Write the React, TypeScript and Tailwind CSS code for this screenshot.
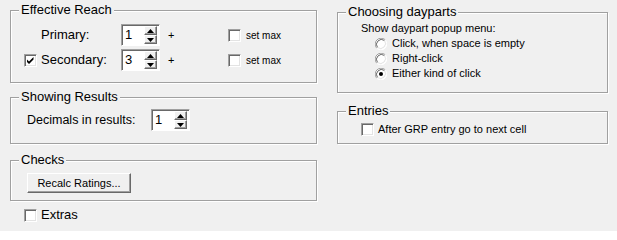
import type { ReactNode } from "react"

function CheckBox({ checked = false }: { checked?: boolean }) {
	return (
		<span className="relative flex h-[13px] w-[13px] shrink-0 items-center justify-center bg-white border border-t-[#a0a0a0] border-l-[#a0a0a0] border-r-white border-b-white shadow-[inset_1px_1px_0_#696969,inset_-1px_-1px_0_#e3e3e3]">
			{checked && (
				<svg width="9" height="9" viewBox="0 0 9 9">
					<path d="M1 3.5 L3 5.5 L7.5 1 L7.5 3.5 L3 8 L1 6 Z" fill="#000" />
				</svg>
			)}
		</span>
	)
}

function Radio({ checked = false }: { checked?: boolean }) {
	return (
		<svg width="12" height="12" viewBox="0 0 12 12" className="shrink-0">
			<circle cx="6" cy="6" r="5.5" fill="#fff" />
			<path d="M1.76 10.24 A6 6 0 0 1 10.24 1.76" stroke="#a0a0a0" strokeWidth="1" fill="none" />
			<path d="M2.5 9.5 A5 5 0 0 1 9.5 2.5" stroke="#696969" strokeWidth="1" fill="none" />
			<path d="M10.24 1.76 A6 6 0 0 1 1.76 10.24" stroke="#fff" strokeWidth="1" fill="none" />
			<path d="M9.5 2.5 A5 5 0 0 1 2.5 9.5" stroke="#e3e3e3" strokeWidth="1" fill="none" />
			{checked && <circle cx="6" cy="6" r="2" fill="#000" />}
		</svg>
	)
}

function SpinButton({ up }: { up?: boolean }) {
	return (
		<span className="flex flex-1 items-center justify-center bg-[#f0f0f0] border border-t-white border-l-white border-r-[#696969] border-b-[#696969] shadow-[inset_-1px_-1px_0_#a0a0a0]">
			<svg width="7" height="4" viewBox="0 0 7 4">
				{up ? <path d="M3.5 0 L7 4 L0 4 Z" fill="#000" /> : <path d="M0 0 L7 0 L3.5 4 Z" fill="#000" />}
			</svg>
		</span>
	)
}

function Spin({ value }: { value: string }) {
	return (
		<div className="flex h-[22px] w-[39px] shrink-0 bg-white border border-t-[#a0a0a0] border-l-[#a0a0a0] border-r-white border-b-white shadow-[inset_1px_1px_0_#696969]">
			<span className="flex-1 pl-[3px] pt-[1px] text-[13px] leading-[18px]">{value}</span>
			<div className="flex w-[15px] flex-col py-[1px] pr-[2px]">
				<SpinButton up />
				<SpinButton />
			</div>
		</div>
	)
}

function Group({ title, className, children }: { title: string, className?: string, children: ReactNode }) {
	return (
		<fieldset className={"border border-[#a0a0a0] px-[8px] shadow-[inset_1px_1px_0_#fff,1px_1px_0_#fff] " + (className ?? "")}>
			<legend className="bg-[#f0f0f0] px-[2px] text-[13px] leading-[16px]">{title}</legend>
			{children}
		</fieldset>
	)
}

function ReachRow({ label, value, checkable, checked }: { label: string, value: string, checkable?: boolean, checked?: boolean }) {
	return (
		<div className="flex h-[22px] items-center">
			<span className="flex w-[22px] pl-[5px]">{checkable && <CheckBox checked={checked} />}</span>
			<span className="w-[80px] text-[13px]">{label}</span>
			<Spin value={value} />
			<span className="w-[68px] pl-[8px] text-[11px]">+</span>
			<CheckBox />
			<span className="ml-[5px] text-[10px]">set max</span>
		</div>
	)
}

export default function App() {
	return (
		<div className="flex h-[231px] w-[617px] bg-[#f0f0f0] pl-[10px] pt-[2px] font-['Liberation_Sans',Arial,sans-serif] text-black select-none">
			<div className="flex w-[307px] flex-col">
				<Group title="Effective Reach">
					<div className="flex flex-col gap-[3px] pt-[6px] pb-[11px]">
						<ReachRow label="Primary:" value="1" />
						<ReachRow label="Secondary:" value="3" checkable checked />
					</div>
				</Group>

				<Group title="Showing Results" className="mt-[6px]">
					<div className="flex items-center pl-[8px] pt-[4px] pb-[12px]">
						<span className="w-[124px] text-[12.5px]">Decimals in results:</span>
						<Spin value="1" />
					</div>
				</Group>

				<Group title="Checks" className="mt-[8px]">
					<div className="pl-[8px] pt-[2px] pb-[6px]">
						<button className="h-[20px] w-[104px] bg-[#f0f0f0] text-[11px] border border-t-white border-l-white border-r-[#696969] border-b-[#696969] shadow-[inset_-1px_-1px_0_#a0a0a0]">
							Recalc Ratings...
						</button>
					</div>
				</Group>

				<div className="mt-[6px] flex h-[16px] items-center pl-[14px]">
					<CheckBox />
					<span className="ml-[4px] text-[13px]">Extras</span>
				</div>
			</div>

			<div className="ml-[20px] mt-[2px] flex w-[271px] flex-col">
				<Group title="Choosing dayparts">
					<div className="flex flex-col pt-[1px] pb-[11px] text-[11px]">
						<div className="flex h-[15px] items-center pl-[15px]">Show daypart popup menu:</div>
						<div className="flex h-[15px] items-center pl-[29px]"><Radio /><span className="ml-[5px]">Click, when space is empty</span></div>
						<div className="flex h-[15px] items-center pl-[29px]"><Radio /><span className="ml-[5px]">Right-click</span></div>
						<div className="flex h-[15px] items-center pl-[29px]"><Radio checked /><span className="ml-[5px]">Either kind of click</span></div>
					</div>
				</Group>

				<Group title="Entries" className="mt-[10px]">
					<div className="flex h-[16px] items-center pl-[15px] mt-[2px] mb-[6px] text-[11px]">
						<CheckBox />
						<span className="ml-[4px]">After GRP entry go to next cell</span>
					</div>
				</Group>
			</div>
		</div>
	)
}
